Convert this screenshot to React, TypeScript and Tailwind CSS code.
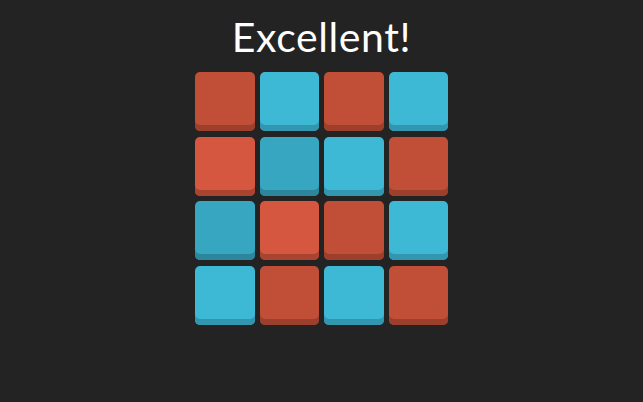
import React from 'react';

type Tone = 'red' | 'redLight' | 'cyan' | 'cyanDark';

const toneClass: Record<Tone, string> = {
  red: 'bg-[#c14e37] shadow-[inset_0_-6px_0_#9c3f2d]',
  redLight: 'bg-[#d5573f] shadow-[inset_0_-6px_0_#a8442f]',
  cyan: 'bg-[#3db9d6] shadow-[inset_0_-6px_0_#3196ae]',
  cyanDark: 'bg-[#37a6c1] shadow-[inset_0_-6px_0_#2c869c]',
};

const board: Tone[][] = [
  ['red', 'cyan', 'red', 'cyan'],
  ['redLight', 'cyanDark', 'cyan', 'red'],
  ['cyanDark', 'redLight', 'red', 'cyan'],
  ['cyan', 'red', 'cyan', 'red'],
];

const Tile: React.FC<{ tone: Tone }> = ({ tone }) => (
  <div className={`h-[59px] w-[59.5px] rounded-[5px] ${toneClass[tone]}`} />
);

export default function App() {
  return (
    <div className="flex h-[402px] w-[643px] flex-col items-center bg-[#232323] font-['Lato',sans-serif]">
      <h1 className="mt-[11px] h-[51px] text-[41px] leading-[51px] font-normal tracking-[0.6px] text-white">
        Excellent!
      </h1>
      <div className="mt-[10px] grid grid-cols-[repeat(4,59.5px)] gap-x-[5px] gap-y-[5.5px]">
        {board.map((row, r) =>
          row.map((tone, c) => <Tile key={`${r}-${c}`} tone={tone} />),
        )}
      </div>
    </div>
  );
}
